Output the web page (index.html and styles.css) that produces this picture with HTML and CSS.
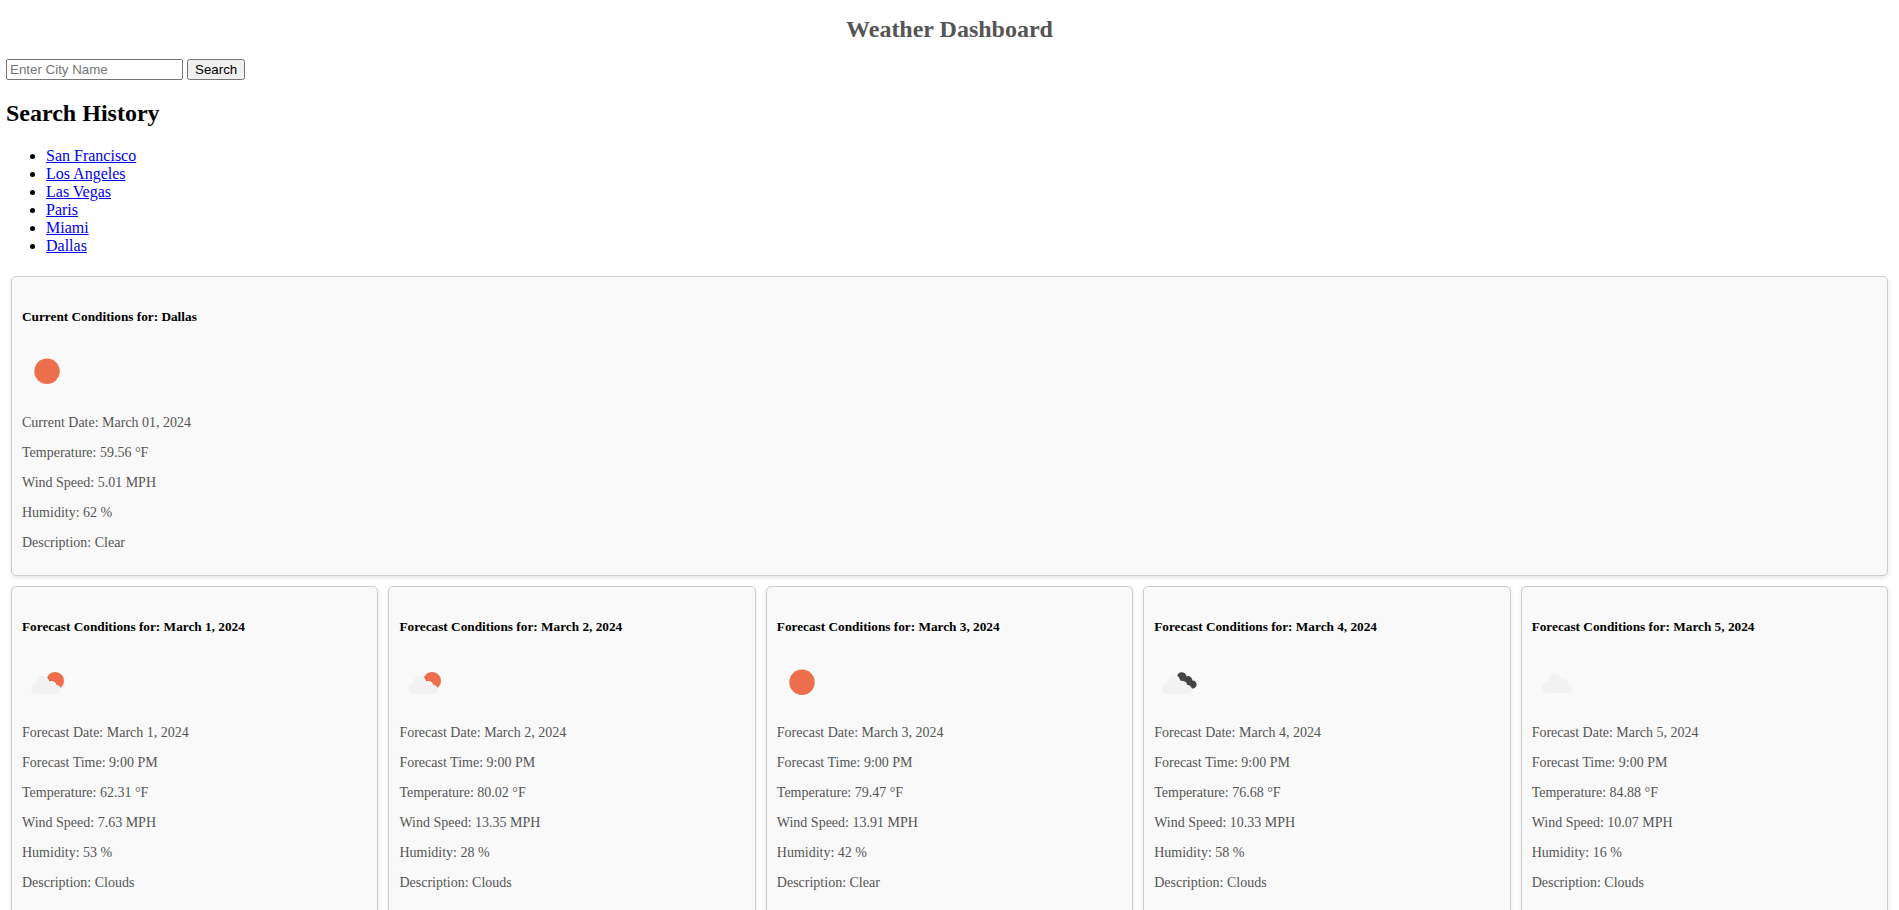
FILE: index.html
```html
<!DOCTYPE html>
<html lang="en">
<head>
<meta charset="utf-8">
<title>Weather Dashboard</title>
<link rel="stylesheet" href="styles.css">
</head>
<body>
<svg class="defs" width="0" height="0" aria-hidden="true">
  <symbol id="sun" viewBox="0 0 50 50"><circle cx="25" cy="25.2" r="12.7" fill="#ec6e4c"/></symbol>
  <symbol id="cloud" viewBox="0 0.400 50 50">
    <g fill="#f2f2f2">
      <circle cx="15.800" cy="30.900" r="5.600"/>
      <circle cx="22.700" cy="23.600" r="6.400"/>
      <circle cx="31.200" cy="27" r="4.700"/>
      <circle cx="35.900" cy="32" r="4.500"/>
      <path d="M15.800 25.300h15.400l4.700 11.200H15.800z"/>
    </g>
  </symbol>
  <symbol id="few-clouds" viewBox="0 0.400 50 50">
    <path fill="#ec6e4c" d="M25.300 20.300a8.800 8.800 0 1 1 13.400 10.800c-.7-.8-1.500-1.100-2.600-1.300-.3-1.300-1-2.300-2.100-3-.4-1.500-1.900-2.400-3.700-2.500-.9-.6-1.900-.3-2.900.1-.4-1.600-1.100-2.900-2.100-4.100z"/>
    <path fill="none" stroke="#e94e20" stroke-width="1" d="M25.500 20.700c1 1.200 1.700 2.500 2.100 3.900 1-.4 2-.6 2.900.1 1.800.1 3.200 1 3.600 2.400 1.100.7 1.700 1.700 2 2.900 1 .2 1.800.6 2.500 1.100"/>
    <g fill="#f2f2f2">
      <circle cx="14.500" cy="32" r="5.500"/>
      <circle cx="20.800" cy="25.500" r="6.300"/>
      <circle cx="29.500" cy="29" r="4.700"/>
      <circle cx="34.500" cy="33" r="4.500"/>
      <path d="M14.500 26.500h15l5 11h-20z"/>
    </g>
  </symbol>
  <symbol id="broken-clouds" viewBox="0 0.400 50 50">
    <path fill="#444" d="M23.200 19.200a4.680 4.680 0 0 1 9.200.7 4.300 4.300 0 0 1 6 4.100 3.900 3.900 0 1 1-1.900 7.100c-.5-.6-.9-1.100-1.600-1.500-.9-.2-2-.8-2.500-1.800-.3-1.600-1.300-2.700-2.900-2.700-.6-.9-1.700-1-2.800-.8-.9-1.900-1.800-3.700-3.500-5.100z"/>
    <g fill="#f2f2f2">
      <circle cx="13.500" cy="32" r="5.500"/>
      <circle cx="19.800" cy="25.500" r="6.300"/>
      <circle cx="28.500" cy="29" r="4.700"/>
      <circle cx="33.500" cy="33" r="4.500"/>
      <path d="M13.500 26.500h15l5 11h-20z"/>
    </g>
  </symbol>
</svg>
<h1 class="title">Weather Dashboard</h1>
<form class="search" onsubmit="return false">
  <input class="search-input" type="text" placeholder="Enter City Name">
  <button class="search-button" type="submit">Search</button>
</form>
<h2 class="history-title">Search History</h2>
<ul class="history">
  <li><a href="#">San Francisco</a></li>
  <li><a href="#">Los Angeles</a></li>
  <li><a href="#">Las Vegas</a></li>
  <li><a href="#">Paris</a></li>
  <li><a href="#">Miami</a></li>
  <li><a href="#">Dallas</a></li>
</ul>
<section class="row">
  <article class="card">
    <h5>Current Conditions for: Dallas</h5>
    <div class="icon"><svg><use href="#sun"/></svg></div>
    <p>Current Date: March 01, 2024</p>
    <p>Temperature: 59.56 °F</p>
    <p>Wind Speed: 5.01 MPH</p>
    <p>Humidity: 62 %</p>
    <p>Description: Clear</p>
  </article>
</section>
<section class="row">
  <article class="card">
    <h5>Forecast Conditions for: March 1, 2024</h5>
    <div class="icon"><svg><use href="#few-clouds"/></svg></div>
    <p>Forecast Date: March 1, 2024</p>
    <p>Forecast Time: 9:00 PM</p>
    <p>Temperature: 62.31 °F</p>
    <p>Wind Speed: 7.63 MPH</p>
    <p>Humidity: 53 %</p>
    <p>Description: Clouds</p>
  </article>
  <article class="card">
    <h5>Forecast Conditions for: March 2, 2024</h5>
    <div class="icon"><svg><use href="#few-clouds"/></svg></div>
    <p>Forecast Date: March 2, 2024</p>
    <p>Forecast Time: 9:00 PM</p>
    <p>Temperature: 80.02 °F</p>
    <p>Wind Speed: 13.35 MPH</p>
    <p>Humidity: 28 %</p>
    <p>Description: Clouds</p>
  </article>
  <article class="card">
    <h5>Forecast Conditions for: March 3, 2024</h5>
    <div class="icon"><svg><use href="#sun"/></svg></div>
    <p>Forecast Date: March 3, 2024</p>
    <p>Forecast Time: 9:00 PM</p>
    <p>Temperature: 79.47 °F</p>
    <p>Wind Speed: 13.91 MPH</p>
    <p>Humidity: 42 %</p>
    <p>Description: Clear</p>
  </article>
  <article class="card">
    <h5>Forecast Conditions for: March 4, 2024</h5>
    <div class="icon"><svg><use href="#broken-clouds"/></svg></div>
    <p>Forecast Date: March 4, 2024</p>
    <p>Forecast Time: 9:00 PM</p>
    <p>Temperature: 76.68 °F</p>
    <p>Wind Speed: 10.33 MPH</p>
    <p>Humidity: 58 %</p>
    <p>Description: Clouds</p>
  </article>
  <article class="card">
    <h5>Forecast Conditions for: March 5, 2024</h5>
    <div class="icon"><svg><use href="#cloud"/></svg></div>
    <p>Forecast Date: March 5, 2024</p>
    <p>Forecast Time: 9:00 PM</p>
    <p>Temperature: 84.88 °F</p>
    <p>Wind Speed: 10.07 MPH</p>
    <p>Humidity: 16 %</p>
    <p>Description: Clouds</p>
  </article>
</section>
</body>
</html>
```
FILE: styles.css
```css
html {
  height: 100%;
  overflow: hidden;
}

body {
  box-sizing: border-box;
  height: 100vh;
  overflow: clip;
  margin: 0;
  padding: 16px 6px 0;
  font: 16px/18px "Liberation Serif", "Times New Roman", serif;
  color: #000;
  background: #fff;
}

.defs {
  display: none;
}

.title {
  margin: 0 0 16px;
  font-size: 24px;
  line-height: 27px;
  text-align: center;
  color: #555;
}

.search {
  display: flex;
  gap: 4px;
}

.search-input,
.search-button {
  box-sizing: border-box;
  height: 21px;
  font: 13.333px "Liberation Sans", Arial, sans-serif;
}

.search-input {
  width: 177px;
}

.search-button {
  width: 58px;
  padding: 1px 6px;
}

.history-title {
  margin: 20px 0;
  font-size: 24px;
  line-height: 27px;
}

.history {
  margin: 0 0 16px;
  padding-left: 40px;
}

.history a {
  color: #00e;
}

.row {
  display: flex;
}

.card {
  flex: 1;
  margin: 5px;
  padding: 10px 10px 10.8px;
  border: 1px solid #ccc;
  border-radius: 5px;
  background: #f9f9f9;
  box-shadow: 0 2px 4px rgba(0, 0, 0, 0.1);
}

.card h5 {
  margin: 21.6px 0 22.75px;
  font-size: 13.28px;
  line-height: 15px;
}

.icon {
  height: 54.3px;
}

.icon svg {
  display: block;
  width: 50px;
  height: 50px;
}

.card p {
  margin: 14px 0;
  font-size: 14px;
  line-height: 16px;
  color: #555;
}
```
